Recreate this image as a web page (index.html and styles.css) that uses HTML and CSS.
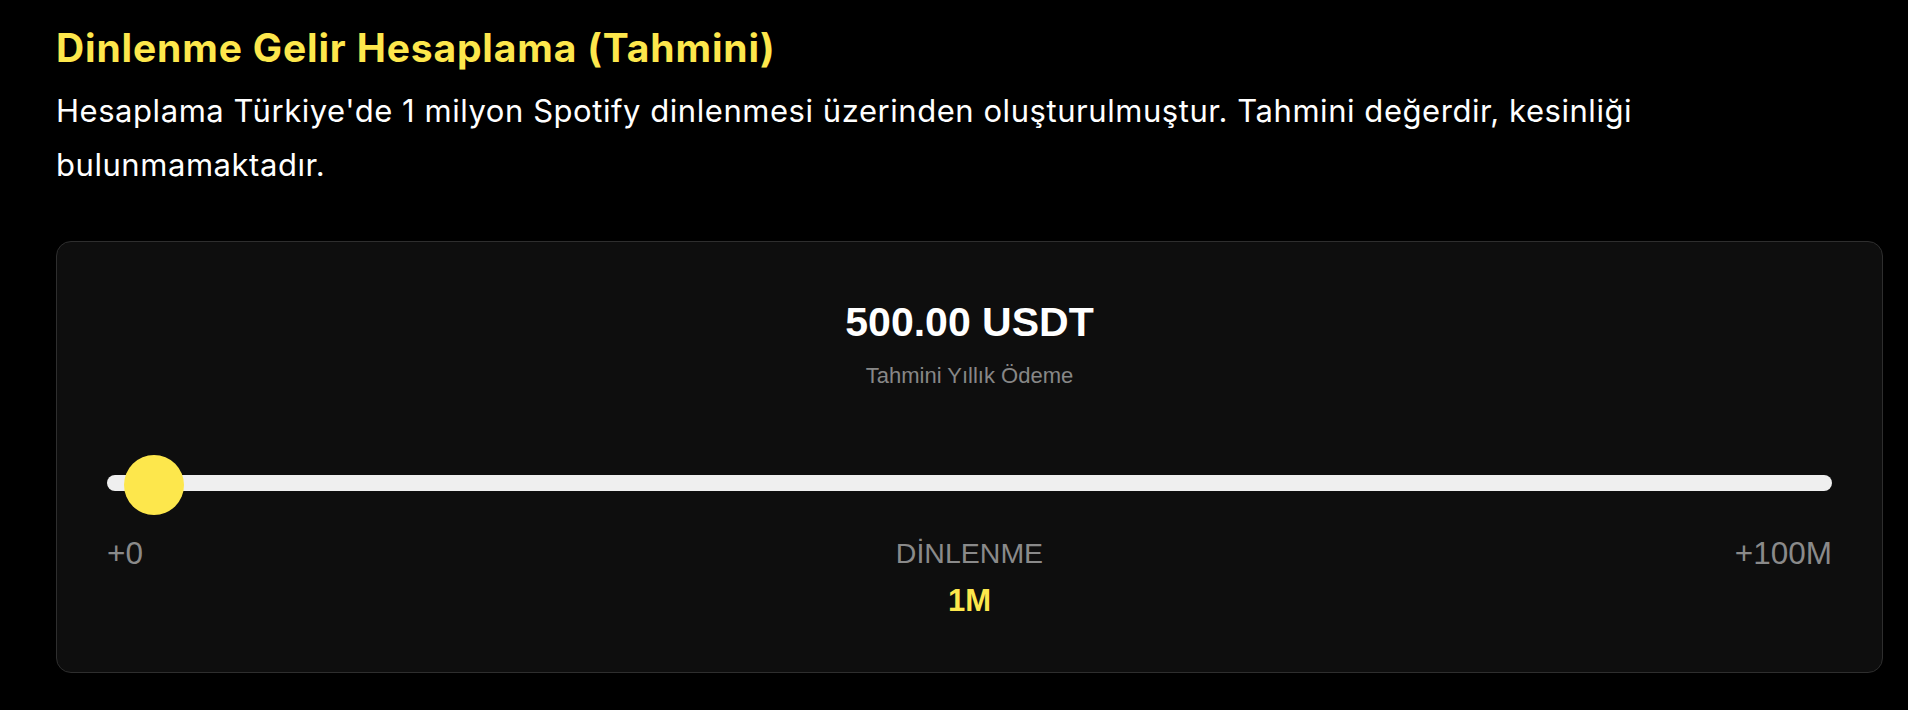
FILE: index.html
```html
<!DOCTYPE html>
<html lang="tr">
<head>
	<meta charset="UTF-8">
	<title>Dinlenme Gelir Hesaplama</title>
	<link rel="stylesheet" href="styles.css">
</head>
<body>
	<div class="page">
		<h1 class="title">Dinlenme Gelir Hesaplama (Tahmini)</h1>
		<p class="intro">Hesaplama Türkiye'de 1 milyon Spotify dinlenmesi üzerinden oluşturulmuştur. Tahmini değerdir, kesinliği bulunmamaktadır.</p>

		<div class="calc">
			<div class="amount">500.00 USDT</div>
			<div class="amount-label">Tahmini Yıllık Ödeme</div>

			<div class="slider">
				<div class="track"></div>
				<span class="thumb" style="left:calc((100% - 60px) * 0.01);"></span>
			</div>

			<div class="scale">
				<span class="min">+0</span>
				<div class="mid">
					<div class="mid-name">DİNLENME</div>
					<div class="mid-value">1M</div>
				</div>
				<span class="max">+100M</span>
			</div>
		</div>
	</div>
</body>
</html>
```

FILE: styles.css
```css
html,body{margin:0;padding:0;background:#000;}
.page{padding:24px 25px 0 56px;}
.title{margin:0;font-family:Inter,"Noto Sans",sans-serif;font-weight:700;font-size:39px;line-height:48px;color:#fde74c;letter-spacing:0.85px;}
.intro{margin:12px 0 0;max-width:1700px;font-family:Inter,"Noto Sans",sans-serif;font-size:31px;line-height:54px;color:#fff;letter-spacing:0.55px;}

.calc{margin-top:49px;background:#0e0e0e;border:1px solid #2e2e2e;border-radius:15px;padding:56px 50px 53px;font-family:"Liberation Sans",Arial,sans-serif;text-align:center;}
.amount{font-size:41px;line-height:48px;font-weight:700;color:#fff;}
.amount-label{margin-top:16px;font-size:22px;line-height:28px;color:#878787;}

.slider{position:relative;height:40px;padding-top:20px;margin-top:65px;}
.track{height:16px;border-radius:8px;background:#efefef;}
.thumb{position:absolute;top:0;width:60px;height:60px;border-radius:50%;background:#fde74c;}

.scale{display:grid;grid-template-columns:1fr auto 1fr;margin-top:20px;font-size:28.5px;line-height:36px;color:#8a8a8a;}
.min,.max{font-size:31.5px;}
.min{text-align:left;}
.max{text-align:right;}
.mid-value{margin-top:12px;font-size:31px;font-weight:700;color:#fde74c;}
```
